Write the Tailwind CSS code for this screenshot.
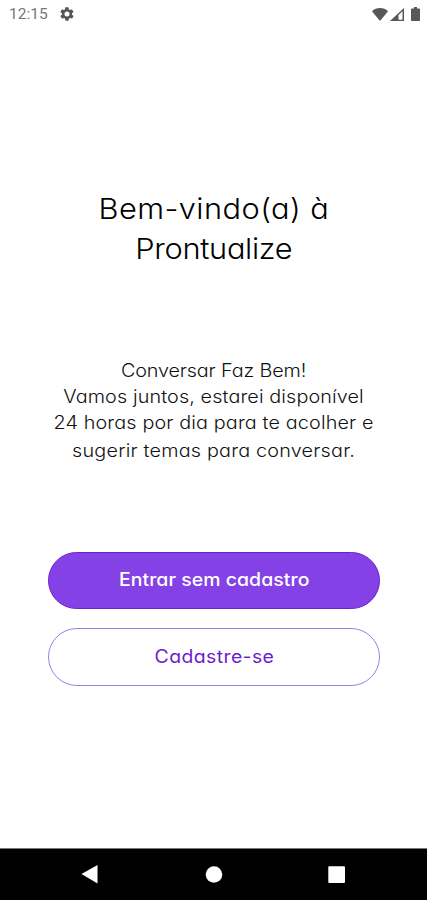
<!DOCTYPE html>
<html lang="pt-BR">
<head>
<meta charset="utf-8">
<meta name="viewport" content="width=device-width, initial-scale=1">
<title>Prontualize</title>
<script src="https://cdn.jsdelivr.net/npm/@tailwindcss/browser@4"></script>
</head>
<body class="bg-white">
<div class="flex h-[900px] w-[427px] flex-col overflow-hidden bg-white font-[Inter,sans-serif] [font-feature-settings:'cv11']">
  <header class="flex h-7 shrink-0 items-center pl-[9px] pr-[7px] text-[#777]">
    <span class="font-[Roboto,sans-serif] text-[15.5px] leading-7">12:15</span>
    <svg class="ml-[11px] size-4" viewBox="0 0 24 24" fill="#555"><path fill-rule="evenodd" d="M19.4 13c0-.3.1-.6.1-1s0-.7-.1-1l2.1-1.600c.2-.2.2-.5.1-.7l-2-3.400c-.1-.2-.4-.3-.6-.2l-2.500 1c-.5-.4-1.100-.7-1.700-1l-.4-2.600c0-.2-.2-.5-.5-.5h-4c-.2 0-.5.200-.5.500l-.4 2.600c-.6.300-1.200.600-1.700 1l-2.500-1c-.2-.1-.5 0-.6.200l-2 3.400c-.1.200-.1.500.1.700L4.500 11c0 .3-.1.600-.1 1s0 .7.100 1l-2.100 1.600c-.2.200-.2.500-.1.700l2 3.400c.1.200.4.300.6.200l2.500-1c.5.400 1.100.7 1.700 1l.4 2.600c0 .3.300.5.500.5h4c.3 0 .5-.2.5-.5l.4-2.600c.6-.3 1.200-.6 1.700-1l2.500 1c.2.100.5 0 .6-.2l2-3.400c.1-.2.100-.5-.1-.7zM12 15.800a3.800 3.800 0 1 1 0-7.600 3.800 3.800 0 0 1 0 7.600z"/></svg>
    <div class="ml-auto flex items-center">
      <svg class="h-[13px] w-4" viewBox="0 0 16 13" fill="#575757"><path d="M0 3.300C2.200 1.200 5 .1 8 .1s5.800 1.100 8 3.200L8 13z"/></svg>
      <svg class="ml-[2px] h-[13px] w-[14px]" viewBox="0 0 14 13" fill="#575757"><path fill-rule="evenodd" d="M0 13 14 0v13zM8.500 7v4.800h4V3.200z"/></svg>
      <svg class="ml-[7px] h-[14px] w-[9px]" viewBox="0 0 9 14" fill="#575757"><path d="M3 0h3v1.500h2.200c.5 0 .8.300.8.800v10.900c0 .5-.3.800-.8.800H.8c-.5 0-.8-.3-.8-.8V2.300c0-.5.300-.8.800-.8H3z"/></svg>
    </div>
  </header>
  <main class="flex flex-1 flex-col items-center pl-px text-center">
    <h1 class="mt-[161px] scale-x-[1.08] text-[28.500px] font-light leading-10 text-black">
      <span class="block whitespace-nowrap tracking-[0.4px]">Bem-vindo(a) à</span>
      <span class="block whitespace-nowrap tracking-[-0.3px]">Prontualize</span>
    </h1>
    <p class="mt-[89px] scale-x-[1.1] text-[18px] font-light leading-[26px] text-[#111]">
      <span class="block whitespace-nowrap tracking-[-0.13px]">Conversar Faz Bem!</span>
      <span class="block whitespace-nowrap tracking-[0.1px]">Vamos juntos, estarei disponível</span>
      <span class="block whitespace-nowrap tracking-[0.12px]">24 horas por dia para te acolher e</span>
      <span class="block whitespace-nowrap pt-0.5 tracking-[0.18px]">sugerir temas para conversar.</span>
    </p>
    <div class="mt-[88px] flex w-[332px] flex-col gap-[19px]">
      <button class="h-[57px] rounded-full border border-[#6d1fd0] bg-[#8442e6] pb-0.5 text-[18px] font-medium tracking-[0.05px] text-white"><span class="inline-block scale-x-[1.08]">Entrar sem cadastro</span></button>
      <button class="h-[58px] rounded-full border border-[#9a7fe6] bg-white pb-0.5 text-[18px] tracking-[0.37px] text-[#6c1cd0]"><span class="inline-block scale-x-[1.08]">Cadastre-se</span></button>
    </div>
  </main>
  <nav class="flex h-[52px] shrink-0 items-center border-t border-[#777] bg-black">
    <svg class="h-[51px] w-full" viewBox="0 0 427 51" fill="#fff"><path d="M81.500 25 97.500 16v18.500z"/><circle cx="214" cy="25.500" r="8.300"/><rect x="328.300" y="17.300" width="16.700" height="16.700" rx="1"/></svg>
  </nav>
</div>
</body>
</html>
